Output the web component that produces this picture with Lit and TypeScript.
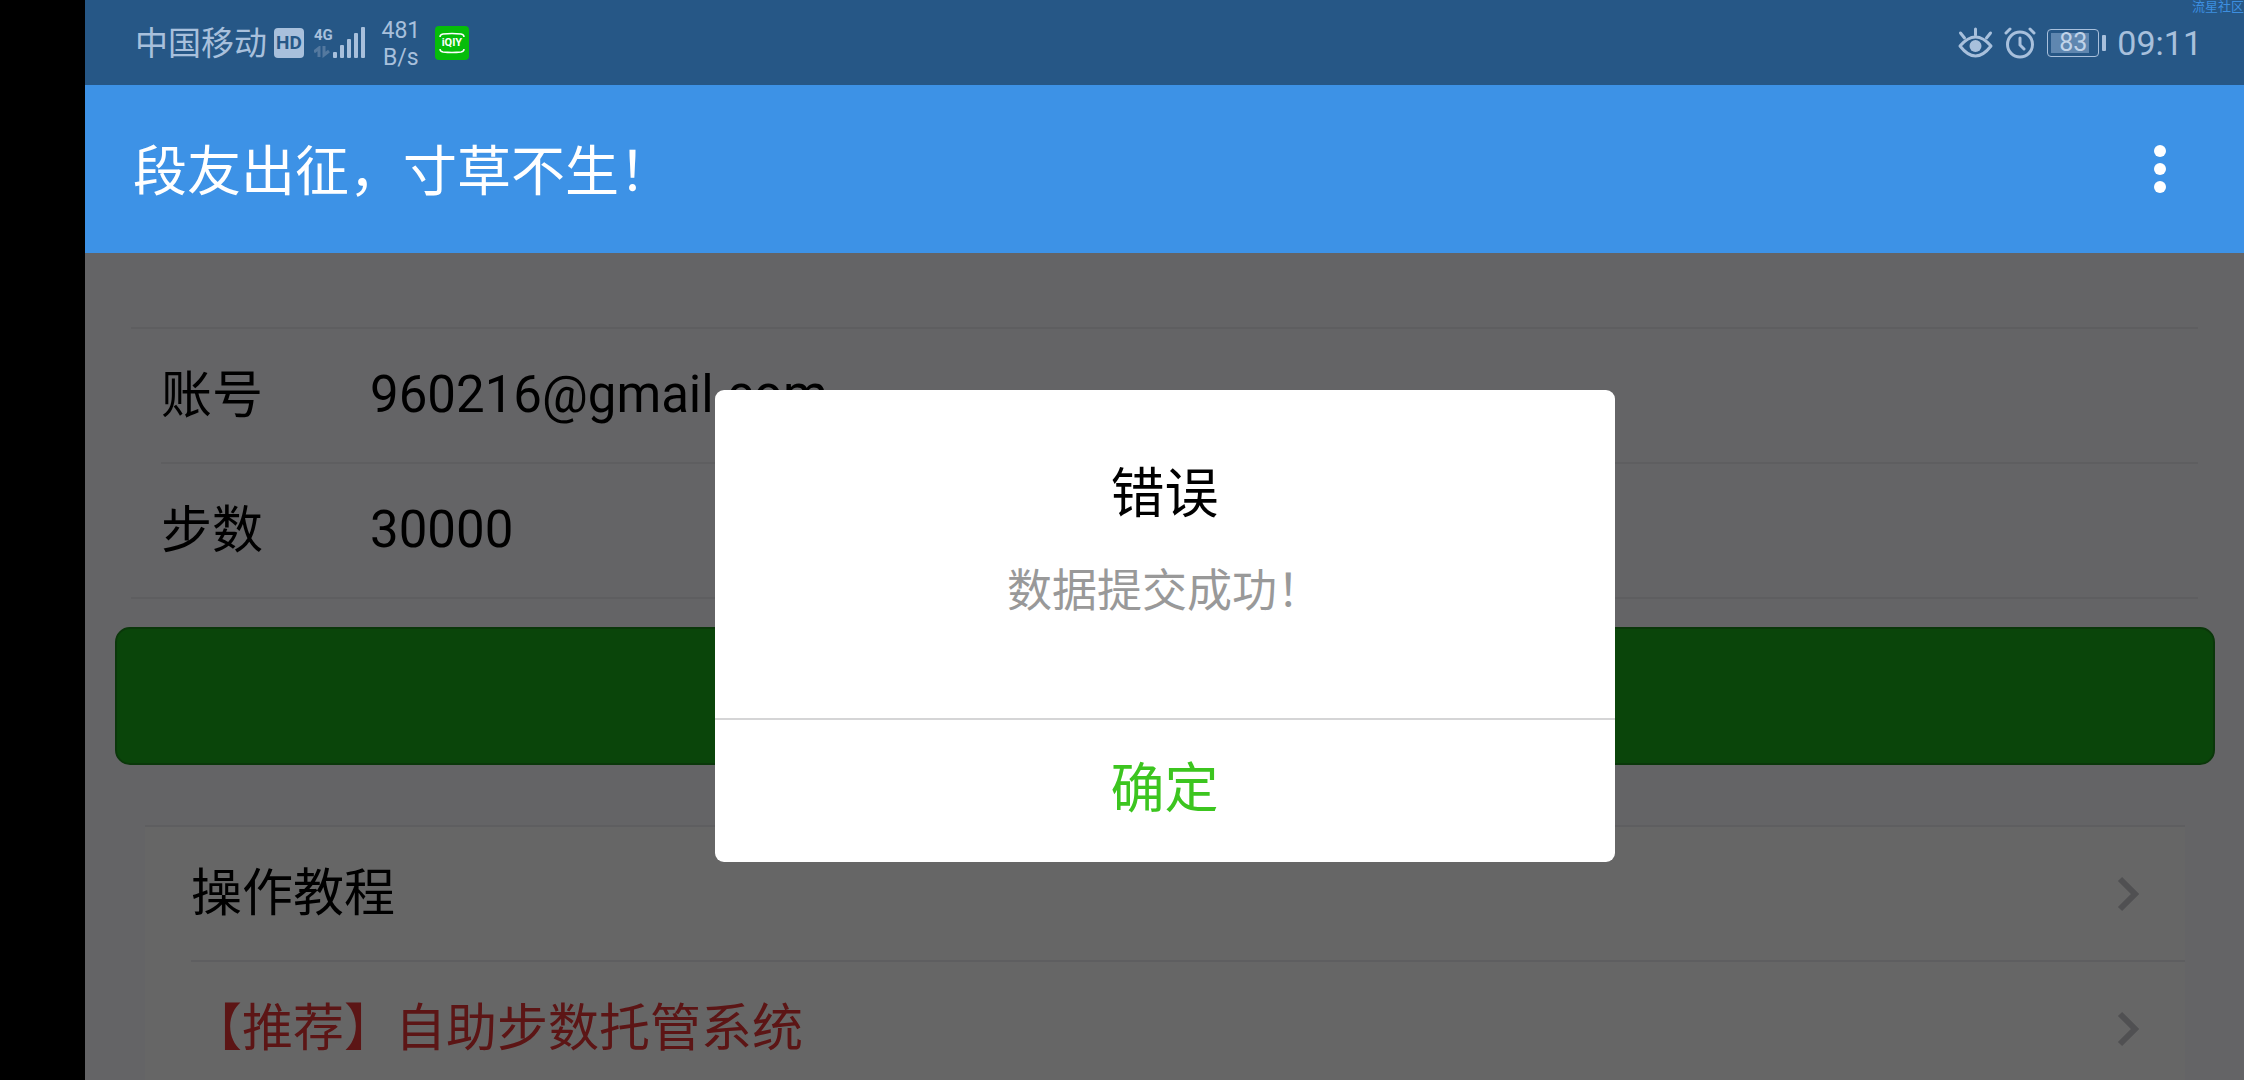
import { LitElement, html, css } from "lit";
import { customElement, state } from "lit/decorators.js";

const LINKS = [
  { text: "操作教程", hot: false },
  { text: "【推荐】自助步数托管系统", hot: true },
];

@customElement("status-bar")
class StatusBar extends LitElement {
  static styles = css`
    :host {
      position: relative;
      display: flex;
      align-items: center;
      justify-content: space-between;
      height: 85px;
      padding: 0 42px 0 50px;
      background: #265786;
      color: #a8c0dc;
    }
    .side {
      display: flex;
      align-items: center;
    }
    .carrier {
      padding-top: 2px;
      font-size: 33px;
      line-height: 40px;
      margin-right: 7px;
    }
    .hd {
      width: 30px;
      height: 30px;
      border-radius: 4px;
      background: #a8c0dc;
      color: #265786;
      font-size: 19px;
      font-weight: 700;
      line-height: 30px;
      text-align: center;
      margin-right: 10px;
    }
    .net {
      display: flex;
      flex-direction: column;
      gap: 3px;
      font-size: 15px;
      font-weight: 700;
      line-height: 16px;
    }
    .net svg,
    .icon {
      display: block;
    }
    .rate {
      width: 40px;
      margin: 2px 14px 0;
      font-size: 23px;
      line-height: 27px;
      text-align: center;
    }
    .app {
      display: flex;
      align-items: center;
      justify-content: center;
      position: relative;
      width: 34px;
      height: 34px;
      border-radius: 4px;
      background: #06bd0a;
      color: #fff;
      font-size: 11px;
      font-weight: 700;
      line-height: 12px;
    }
    .app svg {
      position: absolute;
      inset: 0;
    }
    .right {
      gap: 11px;
    }
    .battery {
      display: flex;
      align-items: center;
      gap: 3px;
    }
    .cell {
      box-sizing: border-box;
      width: 52px;
      height: 28px;
      padding: 3px;
      border: 1px solid #a8c0dc;
      border-radius: 4px;
    }
    .charge {
      height: 20px;
      background: linear-gradient(to right, #5f87b0 87%, transparent 87%);
      color: #c0d3e8;
      font-size: 25px;
      line-height: 20px;
      text-align: center;
    }
    .nub {
      width: 4px;
      height: 16px;
      border-radius: 1px;
      background: #a8c0dc;
    }
    .time {
      font-size: 34px;
      line-height: 40px;
    }
    .mark {
      position: absolute;
      top: 0;
      right: 0;
      font-size: 13px;
      line-height: 14px;
      color: #3d8fe0;
    }
  `;

  render() {
    return html`
      <div class="side">
        <span class="carrier">中国移动</span>
        <span class="hd">HD</span>
        <span class="net">
          4G
          <svg width="18" height="12" viewBox="0 0 18 12" fill="none" stroke="#54799f" stroke-width="3">
            <path d="M0 6L5 2V11M10 0V9L15 5" />
          </svg>
        </span>
        <svg class="icon" width="34" height="32" viewBox="0 0 34 32" fill="#a8c0dc">
          <rect x="0" y="25" width="4" height="6" rx="1" />
          <rect x="7" y="18" width="4" height="13" rx="1" />
          <rect x="14" y="12" width="4" height="19" rx="1" />
          <rect x="21" y="6" width="4" height="25" rx="1" />
          <rect x="28" y="0" width="4" height="31" rx="1" />
        </svg>
        <span class="rate">481<br />B/s</span>
        <span class="app">
          iQIY
          <svg width="34" height="34" viewBox="0 0 34 34" fill="none" stroke="#fff" stroke-width="1.5">
            <path d="M5 11Q5 8.500 8 8Q17 7 26 8Q29 8.500 29 11M5 23Q5 25.500 8 26Q17 27 26 26Q29 25.500 29 23" />
          </svg>
        </span>
      </div>
      <div class="side right">
        <svg class="icon" width="35" height="32" viewBox="0 0 35 32" fill="none" stroke="#a8c0dc" stroke-width="3" stroke-linecap="round">
          <path d="M2 19Q17.500 1 33 19Q17.500 39 2 19Z" stroke-linejoin="round" />
          <circle cx="17.500" cy="19" r="6" fill="#a8c0dc" stroke="none" />
          <path d="M17.500 2V8M2.500 6L6.500 11M32.500 6L28.500 11" />
        </svg>
        <svg class="icon" width="32" height="32" viewBox="0 0 32 32" fill="none" stroke="#a8c0dc" stroke-width="3" stroke-linecap="round">
          <circle cx="16" cy="17.500" r="12.500" />
          <path d="M16 11V18L20 22M2 6L6 2M30 6L26 2" />
        </svg>
        <span class="battery">
          <span class="cell"><div class="charge">83</div></span>
          <span class="nub"></span>
        </span>
        <span class="time">09:11</span>
      </div>
      <span class="mark">流星社区</span>
    `;
  }
}

@customElement("app-root")
class AppRoot extends LitElement {
  @state() private open = true;

  static styles = css`
    :host {
      display: flex;
      flex-direction: column;
      box-sizing: border-box;
      height: 100vh;
      overflow: hidden;
      padding-left: 85px;
      background: #000;
      font-family: Roboto, "Noto Sans CJK SC", sans-serif;
    }
    button,
    input {
      font: inherit;
      border: 0;
      padding: 0;
      margin: 0;
      background: none;
      outline: none;
    }
    button {
      cursor: pointer;
    }
    status-bar {
      flex: none;
    }
    .bar {
      flex: none;
      display: flex;
      align-items: center;
      justify-content: space-between;
      height: 168px;
      padding: 0 60px 0 48px;
      background: #3d92e6;
      color: #fff;
    }
    .bar h1 {
      margin: 0;
      padding-top: 8px;
      font-size: 54px;
      font-weight: 400;
      line-height: 72px;
    }
    .more {
      width: 48px;
      height: 72px;
    }
    .more svg {
      display: block;
      margin: auto;
    }
    main {
      flex: 1;
      min-height: 0;
      position: relative;
      overflow: hidden;
      background: #fbf9fe;
      color: #000;
      font-size: 51px;
    }
    .form {
      margin: 74px 46px 0;
      border-top: 2px solid #ececf0;
      border-bottom: 2px solid #ececf0;
    }
    .field {
      display: flex;
      align-items: center;
      margin-left: 30px;
      height: 133px;
    }
    .field + .field {
      border-top: 2px solid #ececf0;
    }
    .field label {
      width: 209px;
    }
    .field label,
    .links span {
      padding-bottom: 10px;
    }
    .field input {
      flex: 1;
      min-width: 0;
      height: 72px;
      padding-bottom: 2px;
    }
    .submit {
      display: block;
      box-sizing: border-box;
      width: calc(100% - 59px);
      height: 138px;
      margin: 28px 29px 0 30px;
      border: 2px solid #1a8a1a;
      border-radius: 15px;
      background: #1aad19;
    }
    .links {
      margin: 60px 59px 0 60px;
      padding: 0 0 0 46px;
      list-style: none;
      background: #fff;
      border-top: 2px solid #ececf0;
    }
    .links li + li {
      border-top: 2px solid #ececf0;
    }
    .links a {
      display: flex;
      align-items: center;
      justify-content: space-between;
      height: 133px;
      padding-right: 45px;
      color: #000;
      text-decoration: none;
    }
    .links .hot {
      color: #e63535;
    }
    .mask {
      position: absolute;
      inset: 0;
      display: flex;
      align-items: flex-start;
      justify-content: center;
      padding-top: 137px;
      background: rgba(0, 0, 0, 0.6);
    }
    .dialog {
      width: min(900px, 85%);
      border-radius: 9px;
      overflow: hidden;
      background: #fff;
      text-align: center;
    }
    .dialog h2 {
      margin: 0;
      padding-top: 67px;
      font-size: 54px;
      font-weight: 400;
      line-height: 76px;
    }
    .dialog p {
      margin: 0;
      padding: 26px 60px 93px;
      font-size: 45px;
      line-height: 66px;
      color: #999;
    }
    .ok {
      display: block;
      width: 100%;
      height: 144px;
      padding-bottom: 14px;
      border-top: 2px solid #d5d5d6;
      font-size: 54px;
      color: #3cc51f;
    }
  `;

  render() {
    return html`
      <status-bar></status-bar>
      <header class="bar">
        <h1>段友出征，寸草不生！</h1>
        <button class="more" aria-label="更多">
          <svg width="12" height="48" viewBox="0 0 12 48" fill="#fff">
            <circle cx="6" cy="6" r="6" />
            <circle cx="6" cy="24" r="6" />
            <circle cx="6" cy="42" r="6" />
          </svg>
        </button>
      </header>
      <main>
        <form class="form">
          <div class="field">
            <label for="account">账号</label>
            <input id="account" type="text" .value=${"960216@gmail.com"} />
          </div>
          <div class="field">
            <label for="count">步数</label>
            <input id="count" type="text" inputmode="numeric" .value=${"30000"} />
          </div>
        </form>
        <button class="submit" type="button" aria-label="提交" @click=${() => (this.open = true)}></button>
        <ul class="links">
          ${LINKS.map(
            (link) => html`
              <li>
                <a href="#" class=${link.hot ? "hot" : ""}>
                  <span>${link.text}</span>
                  <svg width="24" height="36" viewBox="0 0 24 36" fill="none" stroke="#c8c8cd" stroke-width="6">
                    <path d="M4 3L19 18L4 33" />
                  </svg>
                </a>
              </li>
            `
          )}
        </ul>
        ${this.open
          ? html`
              <div class="mask">
                <div class="dialog" role="dialog" aria-labelledby="title">
                  <h2 id="title">错误</h2>
                  <p>数据提交成功！</p>
                  <button class="ok" @click=${() => (this.open = false)}>确定</button>
                </div>
              </div>
            `
          : ""}
      </main>
    `;
  }
}
